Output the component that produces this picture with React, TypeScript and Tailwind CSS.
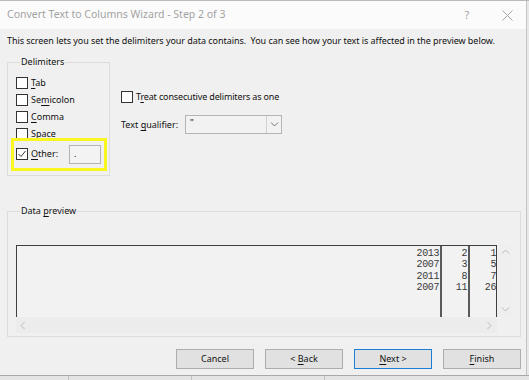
import React from "react";

const F = { fontFamily: '"Noto Sans", "Open Sans", sans-serif' };

function Box({ checked = false }: { checked?: boolean }) {
  return (
    <div className="w-[12px] h-[12px] border border-[#333333] bg-white flex items-center justify-center shrink-0">
      {checked && (
        <svg width="10" height="10" viewBox="0 0 10 10">
          <polyline points="1.5,5 4,7.5 8.5,2" fill="none" stroke="#333" strokeWidth="1" />
        </svg>
      )}
    </div>
  );
}

function U({ c }: { c: string }) {
  return <span className="underline underline-offset-[1.5px]">{c}</span>;
}

function Chev({ dir, color = "#b8b8b8" }: { dir: "up" | "down" | "left" | "right"; color?: string }) {
  const pts: Record<string, string> = {
    up: "1,5.5 4.5,2 8,5.5",
    down: "1,2.5 4.5,6 8,2.5",
    left: "5.5,1 2,4.5 5.5,8",
    right: "2.5,1 6,4.5 2.5,8",
  };
  return (
    <svg width="9" height="9" viewBox="0 0 9 9">
      <polyline points={pts[dir]} fill="none" stroke={color} strokeWidth="1" />
    </svg>
  );
}

export default function App() {
  const rows = [
    ["2013", "2", "1"],
    ["2007", "3", "5"],
    ["2011", "8", "7"],
    ["2007", "11", "26"],
  ];
  const mono = "text-[10px] leading-[11.3px] tracking-[-0.4px] text-[#3a3a3a] pt-[2px]";
  return (
    <div className="w-[529px] h-[380px] overflow-hidden flex flex-col bg-[#e8e8e8] text-[9px] text-[#111]" style={F}>
      <div className="h-[1px] bg-[#b9b9b9]" />
      <div className="flex h-[374px]">
        <div className="w-[527px] border-r border-[#c4c4c4] flex flex-col">
          {/* title bar */}
          <div className="h-[28px] bg-[#fbfbfb] flex items-center pl-[7px] text-[#a3a3a3] text-[10.5px]">
            <span className="flex-1">Convert Text to Columns Wizard - Step 2 of 3</span>
            <span className="w-[10px] text-[11px] text-center mr-[30px]">?</span>
            <svg width="11" height="11" viewBox="0 0 11 11" className="mr-[13px]">
              <path d="M0.5 0.5 L10.5 10.5 M10.5 0.5 L0.5 10.5" stroke="#a3a3a3" strokeWidth="1" />
            </svg>
          </div>
          {/* body */}
          <div className="flex-1 bg-[#f0f0f0] pl-[7px] pr-[5px] flex flex-col">
            <div className="mt-[6px] leading-[12px] tracking-[-0.05px]">
              This screen lets you set the delimiters your data contains.&nbsp; You can see how your text is affected in the preview below.
            </div>
            <div className="flex mt-[9px]">
              <div className="relative">
                <fieldset className="w-[103px] h-[120px] border border-[#dcdcdc] pl-[8px] pt-[6px]">
                  <legend className="ml-[4px] px-[1px] leading-[12px]">Delimiters</legend>
                  <div className="flex items-center h-[17px] gap-[3px]"><Box /><span><U c="T" />ab</span></div>
                  <div className="flex items-center h-[17px] gap-[3px]"><Box /><span>Se<U c="m" />icolon</span></div>
                  <div className="flex items-center h-[17px] gap-[3px]"><Box /><span><U c="C" />omma</span></div>
                  <div className="flex items-center h-[17px] gap-[3px]"><Box /><span><U c="S" />pace</span></div>
                  <div className="flex items-center h-[20px] mt-[2px] gap-[3px]">
                    <Box checked />
                    <span className="w-[35px]"><U c="O" />ther:</span>
                    <div className="w-[32px] h-[19px] border border-[#b4b4b4] bg-[#f3f3f3] pl-[4px] leading-[16px]">.</div>
                  </div>
                </fieldset>
                <div className="absolute left-[4px] top-[82px] w-[96px] h-[33px] border-[3px] border-[#f8f820]" />
              </div>
              <div className="ml-[11px] flex flex-col">
                <div className="flex items-center h-[17px] mt-[32px] gap-[3px]">
                  <Box />
                  <span className="tracking-[-0.15px]">T<U c="r" />eat consecutive delimiters as one</span>
                </div>
                <div className="flex items-center mt-[10px]">
                  <span className="w-[64px]">Text <U c="q" />ualifier:</span>
                  <div className="w-[97px] h-[19px] border border-[#b4b4b4] bg-[#f2f2f2] flex">
                    <div className="flex-1 pl-[4px] leading-[14px]">"</div>
                    <div className="w-[15px] border-l border-[#d0d0d0] flex items-center justify-center">
                      <Chev dir="down" color="#777" />
                    </div>
                  </div>
                </div>
              </div>
            </div>
            {/* data preview */}
            <fieldset className="mt-[29px] w-[514px] h-[132px] border border-[#dcdcdc] pl-[8px] pt-[28px]">
              <legend className="ml-[4px] px-[1px] leading-[12px]">Data <U c="p" />review</legend>
              <div className="flex">
                <div className="flex flex-col w-[481px]">
                  <div className="h-[72px] border-t border-l border-r border-[#3f3f3f] bg-[#f2f2f2] flex" style={{ fontFamily: '"Liberation Mono", monospace' }}>
                    <div className={`flex-1 text-right pr-[1px] ${mono}`}>
                      {rows.map((r, i) => <div key={i}>{r[0]}</div>)}
                    </div>
                    <div className={`w-[28px] border-l-2 border-[#5a5a5a] text-right pr-[1px] ${mono}`}>
                      {rows.map((r, i) => <div key={i}>{r[1]}</div>)}
                    </div>
                    <div className={`w-[28px] border-l-2 border-[#5a5a5a] text-right pr-[0px] ${mono}`}>
                      {rows.map((r, i) => <div key={i}>{r[2]}</div>)}
                    </div>
                  </div>
                  <div className="h-[16px] bg-[#ececec] flex items-center justify-between px-[3px]">
                    <Chev dir="left" />
                    <Chev dir="right" />
                  </div>
                </div>
                <div className="w-[16px] h-[72px] flex flex-col items-center justify-between py-[3px] bg-[#efefef]">
                  <Chev dir="up" />
                  <Chev dir="down" />
                </div>
              </div>
            </fieldset>
            {/* buttons */}
            <div className="flex justify-end gap-[11px] mt-[12px]">
              <div className="w-[78px] h-[20px] bg-[#e1e1e1] border border-[#adadad] flex items-center justify-center">Cancel</div>
              <div className="w-[78px] h-[20px] bg-[#e1e1e1] border border-[#adadad] flex items-center justify-center">
                <span className="whitespace-pre">{"< "}</span><U c="B" />ack
              </div>
              <div className="w-[78px] h-[20px] bg-[#e1e1e1] border border-[#1a7fd4] flex items-center justify-center">
                <U c="N" /><span className="whitespace-pre">{"ext >"}</span>
              </div>
              <div className="w-[78px] h-[20px] bg-[#e1e1e1] border border-[#adadad] flex items-center justify-center"><U c="F" />inish</div>
            </div>
          </div>
        </div>
      </div>
      <div className="h-[1px] bg-[#a8a8a8]" />
      <div className="flex-1 bg-[#e4e4e4] flex">
        <div className="w-[69px] border-r border-[#c0c0c0]" />
        <div className="w-[123px] border-r border-[#c0c0c0]" />
        <div className="w-[133px] border-r border-[#c0c0c0]" />
      </div>
    </div>
  );
}
